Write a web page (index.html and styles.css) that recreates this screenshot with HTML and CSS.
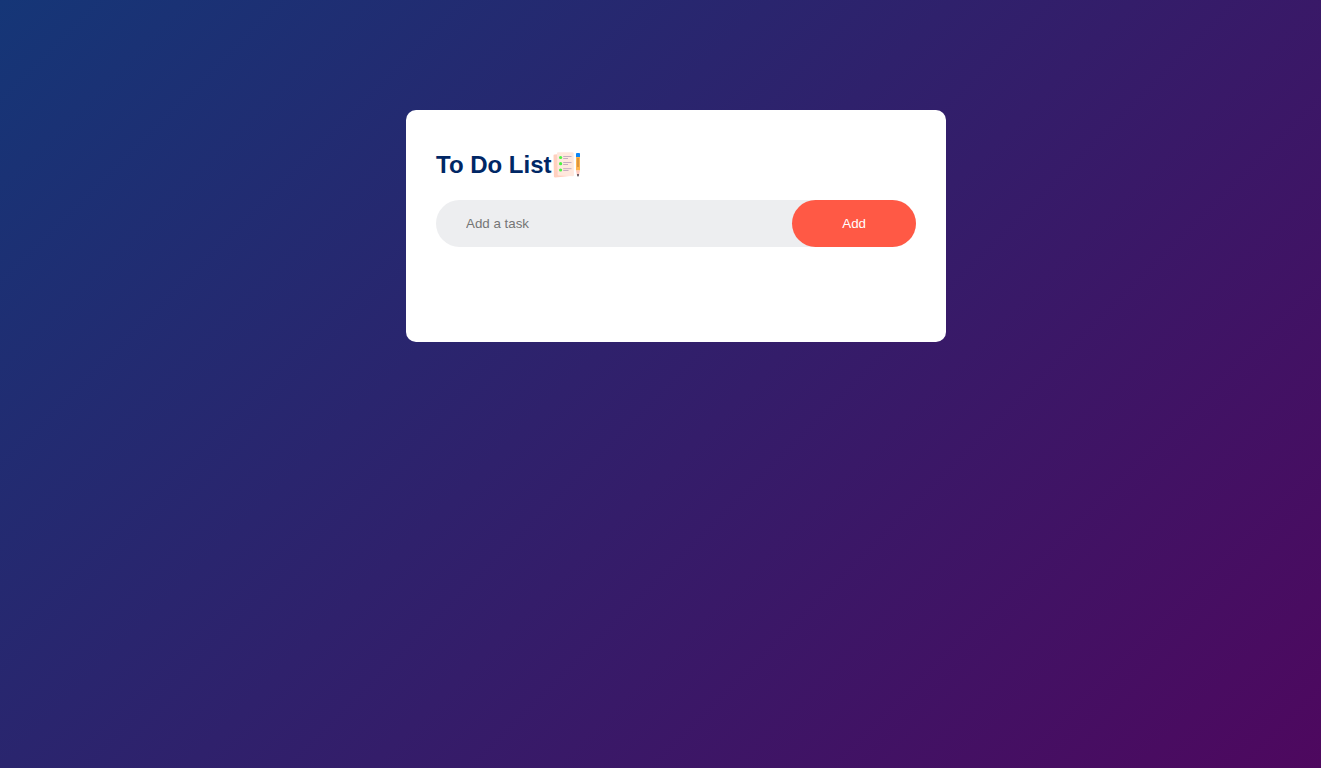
FILE: index.html
```html
<!DOCTYPE html>
<html lang="en">
<head>
  <meta charset="utf-8">
  <meta name="viewport" content="width=device-width, initial-scale=1">
  <title>To Do List</title>
  <link rel="stylesheet" href="styles.css">
</head>
<body>
  <main class="container">
    <section class="todo-app">
      <h2 class="title">To Do List<svg class="title-icon" viewBox="1 0 30 30" aria-hidden="true">
          <path d="M2.500 5.200Q2.500 4.400 3.500 4.400L17 3.500L19 26L4.500 27.600Q3 27.700 2.900 26.500Z" fill="#ffd0bf"/>
          <path d="M6 3.200Q6 2.300 7 2.300H21.500Q22.500 2.300 22.600 3.300L22.900 25Q22.900 26.200 21.800 26.200L8 25.500Q6.800 25.400 6.700 24.200Z" fill="#ffe8dd"/>
          <g fill="#4cf443">
            <circle cx="9.600" cy="7.500" r="1.600"/>
            <circle cx="9.600" cy="13.700" r="1.600"/>
            <circle cx="9.600" cy="20" r="1.600"/>
          </g>
          <path d="M12.200 6.500H20.500M12.200 8.500H17M12.200 12.500H20.500M12.200 14.500H17M12.200 18.700H20.500M12.200 20.500H17.500" fill="none" stroke="#c5adbf" stroke-width="1"/>
          <path d="M25 7H29V20.500H25Z" fill="#ffb44c"/>
          <path d="M27 8V17" stroke="#b97a35" stroke-width="1"/>
          <path d="M25 3.800Q25 3 25.800 3H28.200Q29 3 29 3.800V7H25Z" fill="#0b86f7"/>
          <path d="M25 20.500H29L28 25H26Z" fill="#ffc9bd"/>
          <path d="M25.900 24.200H28.100L27.400 26.500H26.600Z" fill="#45363f"/>
        </svg></h2>
      <form class="row" onsubmit="return false">
        <input class="task-input" type="text" placeholder="Add a task" aria-label="Add a task">
        <button class="add-button" type="submit">Add</button>
      </form>
      <ul class="task-list"></ul>
    </section>
  </main>
</body>
</html>
```
FILE: styles.css
```css
* {
  margin: 0;
  padding: 0;
  box-sizing: border-box;
  font-family: "Liberation Sans", Arial, sans-serif;
}

.container {
  width: 100%;
  min-height: 100vh;
  padding: 10px 10px 10px 41px;
  background: linear-gradient(135deg, #153677, #4e085f);
}

.todo-app {
  width: 100%;
  max-width: 540px;
  margin: 100px auto 20px;
  padding: 40px 30px 70px;
  border-radius: 10px;
  background: #fff;
}

.title {
  display: flex;
  align-items: center;
  margin-bottom: 20px;
  color: #002765;
  font-size: 24px;
}

.title-icon {
  width: 30px;
  height: 30px;
}

.row {
  display: flex;
  align-items: center;
  justify-content: space-between;
  margin-bottom: 25px;
  padding-left: 20px;
  border-radius: 30px;
  background: #edeef0;
}

.task-input {
  flex: 1;
  min-width: 0;
  padding: 10px;
  border: none;
  outline: none;
  background: transparent;
}

.add-button {
  padding: 16px 50px;
  border: none;
  outline: none;
  border-radius: 40px;
  background: #ff5945;
  color: #fff;
  cursor: pointer;
}

.task-list {
  list-style: none;
}
```
